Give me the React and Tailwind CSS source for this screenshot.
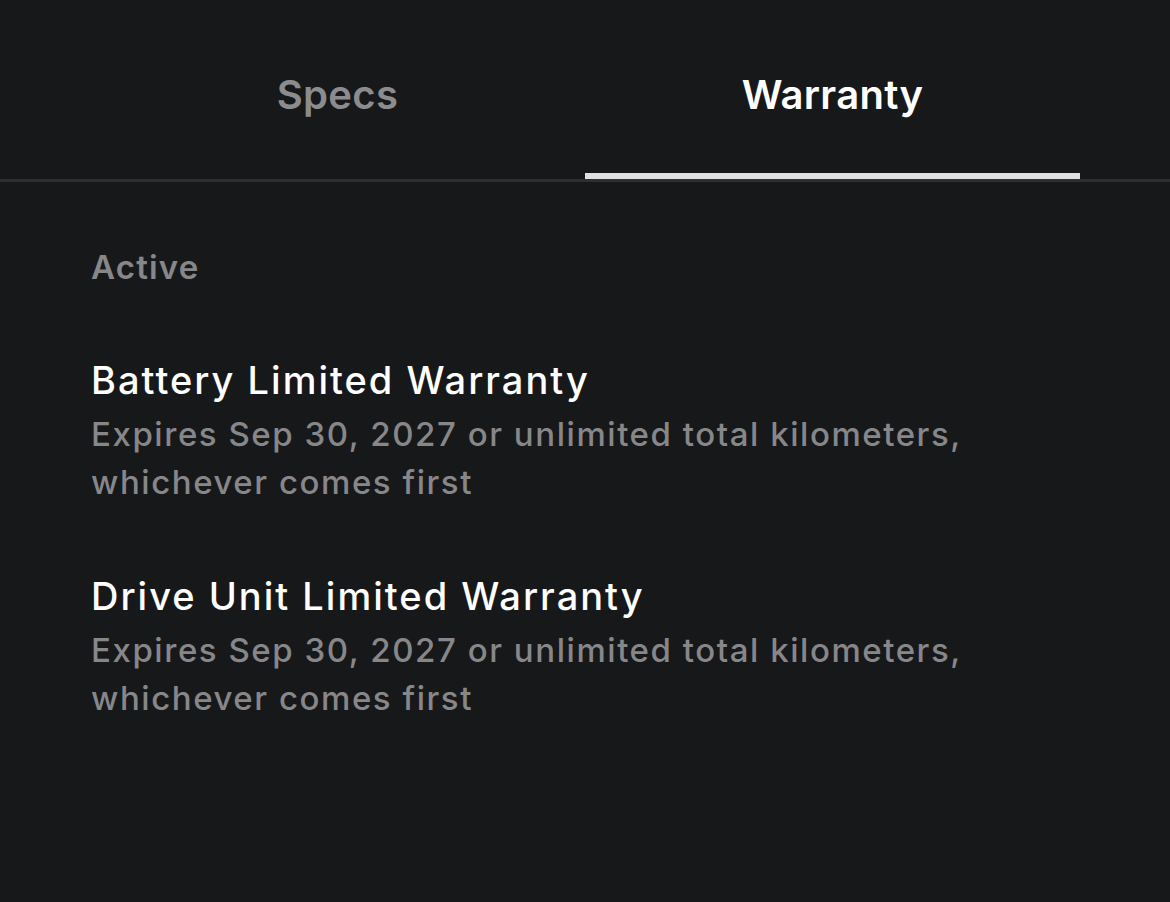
const items = [
  {
    title: "Battery Limited Warranty",
    detail: "Expires Sep 30, 2027 or unlimited total kilometers, whichever comes first",
  },
  {
    title: "Drive Unit Limited Warranty",
    detail: "Expires Sep 30, 2027 or unlimited total kilometers, whichever comes first",
  },
];

export default function App() {
  return (
    <div
      className="min-h-screen w-full bg-[#17181a] text-white"
      style={{ fontFamily: "Inter, 'Liberation Sans', sans-serif" }}
    >
      {/* Tabs */}
      <div className="border-b-[3px] border-[#2e2f31] px-[90px] pt-[70px]">
        <div className="flex">
          <button className="flex h-[109px] flex-1 items-start justify-center pt-0 text-[40px] font-semibold leading-[50px] tracking-[0.3px] text-[#8c8c8e]">
            Specs
          </button>
          <button className="relative flex h-[109px] flex-1 items-start justify-center pt-0 text-[40px] font-semibold leading-[50px] tracking-[0.3px] text-white">
            Warranty
            <span className="absolute bottom-0 left-0 right-0 h-[6px] bg-[#e0e0e2]" />
          </button>
        </div>
      </div>

      {/* Content */}
      <div className="px-[91px] pt-[65px]">
        <p className="text-[33px] font-semibold leading-[40px] tracking-[1.2px] text-[#87878a]">Active</p>

        <div className="mt-[69px] flex flex-col gap-[66px]">
          {items.map((item) => (
            <div key={item.title} className="max-w-[960px]">
              <h3 className="text-[38px] font-medium leading-[48px] tracking-[2px] text-white">{item.title}</h3>
              <p className="mt-[6px] text-[33px] font-medium leading-[48px] tracking-[1.55px] text-[#87878a]">
                {item.detail}
              </p>
            </div>
          ))}
        </div>
      </div>
    </div>
  );
}
